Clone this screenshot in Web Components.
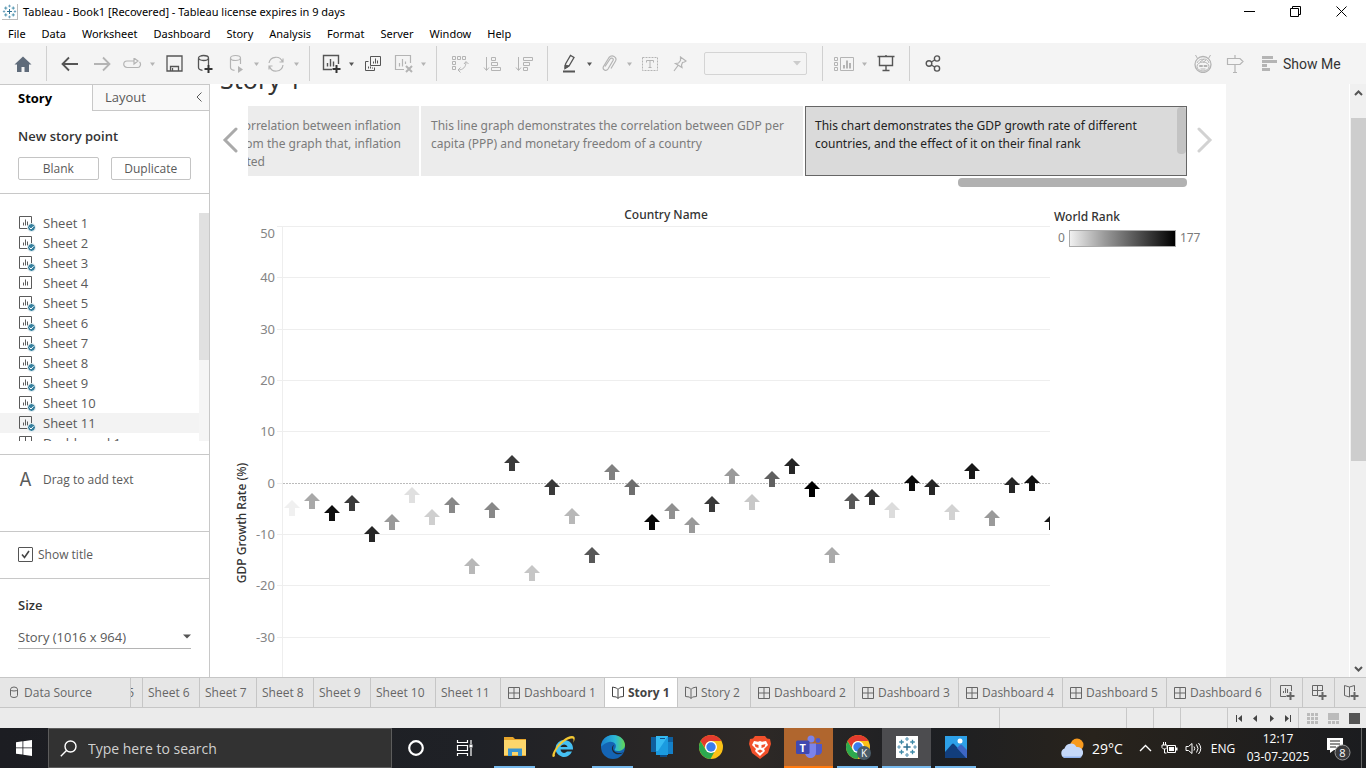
<!DOCTYPE html>
<html lang="en">
<head>
<meta charset="utf-8">
<title>Tableau - Book1</title>
<style>
html,body{margin:0;height:100%}
body{font-family:"Open Sans","Noto Sans",sans-serif;font-size:12px;color:#333;overflow:hidden}
</style>
</head>
<body>
<workbook-window></workbook-window>
<script>
const svg=(w,h,body,extra='')=>`<svg width="${w}" height="${h}" viewBox="0 0 ${w} ${h}" fill="none" stroke="currentColor" ${extra} aria-hidden="true">${body}</svg>`;
const RESET='*{box-sizing:border-box}button,select,input{font:inherit;color:inherit;margin:0;padding:0;border:0;background:none;border-radius:0;outline:0}svg{display:block;flex:none}';
function define(name,html,init){
  const t=document.createElement('template');t.innerHTML=html.replace('<style>','<style>'+RESET);
  customElements.define(name,class extends HTMLElement{
    constructor(){super();this.attachShadow({mode:'open'}).append(t.content.cloneNode(true));}
    connectedCallback(){if(init)init.call(this,this.shadowRoot);}
  });
}
/* Tableau mark: a large centre cross with eight satellites */
const plus=(x,y,r,c,w)=>`<path d="M${x-r} ${y}h${2*r}M${x} ${y-r}v${2*r}" stroke="${c}" stroke-width="${w}"/>`;
const mark=s=>`<svg width="${s}" height="${s}" viewBox="0 0 22 22" fill="none" aria-hidden="true">${plus(11,11,3.6,'#2c6e8f',1.5)}${plus(5.5,6,2.3,'#3f8aa8',1.3)}${plus(16.5,6,2.3,'#3f8aa8',1.3)}${plus(5.5,16,2.3,'#3f8aa8',1.3)}${plus(16.5,16,2.3,'#3f8aa8',1.3)}${plus(11,3,2,'#5b96b5',1.2)}${plus(11,19,2,'#5b96b5',1.2)}${plus(3,11,1.8,'#5b96b5',1.2)}${plus(19,11,1.8,'#5b96b5',1.2)}</svg>`;

define('title-bar',`<style>
:host{display:flex;align-items:center;height:23px;background:#fff;color:#000;font-size:11px;font-family:"Noto Sans",sans-serif;padding-right:2px}
.logo{margin-left:2px;width:16px;height:16px;border-right:1px solid #bbb;border-bottom:1px solid #bbb}
span{margin-left:5px;flex:1}
button{width:46px;height:21px;display:grid;place-items:center}
</style><div class="logo">${mark(15)}</div><span>Tableau - Book1 [Recovered] - Tableau license expires in 9 days</span>
<button aria-label="Minimise">${svg(11,11,'<path d="M0 5.5h11"/>')}</button>
<button aria-label="Restore">${svg(11,11,'<path d="M.5 2.500h8v8H.5zM2.500 2V.5h8v8H8.500"/>')}</button>
<button aria-label="Close">${svg(11,11,'<path d="M.5.5l10 10M10.500.5l-10 10"/>')}</button>`);

define('menu-bar',`<style>
:host{display:flex;height:20px;background:#fff;color:#000;font-size:11px;font-family:"Noto Sans",sans-serif}
button{padding:0 8px;height:20px}
</style>${['File','Data','Worksheet','Dashboard','Story','Analysis','Format','Server','Window','Help'].map(m=>`<button>${m}</button>`).join('')}`);

/* A toolbar button; the "menu" attribute adds the drop-down caret */
define('tool-button',`<style>
:host{display:block;color:#b4b4b4}
:host([on]){color:#555}
button{display:flex;align-items:center;width:32px;height:32px}
.i{width:32px;display:grid;place-items:center}
.c{display:none;width:12px;place-items:center}
:host([menu]) button{width:40px}:host([menu]) .i{width:28px}:host([menu]) .c{display:grid}
:host([narrow]) button,:host([narrow]) .i{width:30px}
</style><button><span class="i"><slot></slot></span><span class="c"><svg width="5" height="4" viewBox="0 0 5 4"><path d="M0 .5h5L2.500 4z" fill="currentColor"/></svg></span></button>`,
function(r){r.querySelector('button').setAttribute('aria-label',this.getAttribute('name'))});

const TI={
home:svg(18,18,'<path d="M9 1.500L.5 9.500h2.500V17h4.500v-5h3v5H15V9.500h2.500z" fill="#5f6b7a" stroke="none"/>'),
back:svg(18,16,'<path d="M17 8H2M8 1.500L1.500 8 8 14.500" stroke-width="1.800"/>'),
fwd:svg(18,16,'<path d="M1 8h15M10 1.500L16.500 8 10 14.500" stroke-width="1.800"/>'),
replay:svg(20,12,'<path d="M12.500 3H5a3.200 3.200 0 0 0 0 6.500h10a3.200 3.200 0 0 0 2.500-5.500M12 0v6l4-3z" stroke-width="1.200"/>'),
save:svg(17,17,'<path d="M1 1h15v15H1zM4.500 16v-4.500h8V16M6.500 13v3" stroke-width="1.300"/>'),
add:svg(18,20,'<path d="M1.500 4.500v9c0 1.500 1.500 2.500 4 2.800M11.500 4.500V11" stroke-width="1.300"/><ellipse cx="6.500" cy="4" rx="5" ry="2.500" stroke-width="1.300"/><path d="M11.500 11v8M7.500 15h8" stroke="#333" stroke-width="2"/>'),
pause:svg(18,20,'<path d="M3.500 4.500v9c0 1.500 1.500 2.500 4 2.800M13.500 4.500V10" stroke-width="1.200"/><ellipse cx="8.500" cy="4" rx="5" ry="2.500" stroke-width="1.200"/><path d="M11 12l5 3.500-5 3.500z" fill="currentColor" stroke="none"/>'),
refresh:svg(18,18,'<path d="M2 8a7 7 0 0 1 13.500-1M16 10A7 7 0 0 1 2.500 11.500M12.500 7h3.500V3.500M5.500 11H2v3.500" stroke-width="1.200"/>'),
chartadd:svg(19,19,'<path d="M16.500 10V1.500h-15v14H10M5.500 12.500V9M8.500 12.500V5M11.500 12.500V7.500" stroke-width="1.400"/><path d="M14.500 11v8M10.500 15h8" stroke="#333" stroke-width="2"/>'),
dup:svg(18,18,'<path d="M6.500 1.500h10v9h-10zM4.500 6.500h-3v9h9v-3M9.500 8.500v-2M11.500 8.500v-5M13.500 8.500v-3M4.500 13.500v-2M6.500 13.500v-2M8.500 13.500v-1"/>'),
clear:svg(19,19,'<path d="M16.500 9V1.500h-15v14H10M5.500 12.500V9M8.500 12.500V5M11.500 10V7.500" stroke-width="1.200"/><path d="M12 12l6 6M18 12l-6 6" stroke-width="2"/>'),
swap:svg(18,18,'<path d="M1.500 1.500h3v3h-3zM6.500 1.500h3v3h-3zM11.500 1.500h3v3h-3zM1.500 6.500h3v3h-3zM1.500 11.500h3v3h-3zM7 15c5 0 8-3 8-8M13 9l2-2.500L17.500 9M9.500 12.500L7 15l2.500 2.500"/>'),
asc:svg(18,16,'<path d="M3.500 1v13M1 11.500l2.500 3 2.500-3M8.500 1.500h4v3h-4zM8.500 6.500h6v3h-6zM8.500 11.500h9v3h-9z"/>'),
desc:svg(18,16,'<path d="M3.500 1v13M1 11.500l2.500 3 2.500-3M8.500 1.500h9v3h-9zM8.500 6.500h6v3h-6zM8.500 11.500h4v3h-4z"/>'),
pen:svg(14,19,'<path d="M3.500 10L8.500 1.500l3.500 2-5 8.500-4 2.500z" stroke-width="1.300"/><path d="M1 17.500h12" stroke-width="2"/><path d="M3 11l4 1-4 2.500z" fill="currentColor"/>'),
clip:svg(16,18,'<path d="M4 11.500L9 4c1.500-2 4-.5 3 1.500L7 14c-2 3-6 .5-4.500-2.500L8 2.500c3-3.500 8.500-.5 6.500 3.500L10 13.500" stroke-width="1.200"/>'),
text:svg(18,16,'<path d="M1.500 1.500h15v13h-15z" stroke-dasharray="2 1"/><path d="M5.500 6.500v-2h7v2M9 4.500v7M7.500 11.500h3"/>'),
pin:svg(14,16,'<path d="M7.500 1L13 5 11.500 6 9.500 6.500 8.500 9l.5 2.500L2.500 7.500 5.500 7 7.500 4.500zM5 9.500L1 15" stroke-width="1.200"/>'),
cards:svg(20,16,'<path d="M.5 1.500h3v3h-3zM.5 6.500h3v3h-3zM.5 11.500h3v3h-3zM6.500 1.500h13v13h-13z"/><path d="M10 12.500V9M13 12.500v-8M16 12.500V7" stroke-width="2"/>'),
present:svg(18,17,'<path d="M.5 1.500h17M2.500 2v8.500h13V2M9 11v5M5.500 15.500h7M9 0v1" stroke-width="1.400"/>'),
share:svg(16,17,'<circle cx="4" cy="8.500" r="2.800"/><circle cx="12" cy="3.500" r="2.600"/><circle cx="12" cy="13.500" r="2.600"/><path d="M6.300 7L9.700 5M6.300 10l3.400 2"/>','stroke-width="1.400"'),
face:svg(20,19,'<circle cx="10" cy="10.500" r="8" stroke-width="1.300"/><path d="M4.500 4.500L2.500 1M15.500 4.500l2-3.500"/><ellipse cx="10" cy="12.500" rx="6" ry="4.500"/><path d="M4 9c2-4 5-4 6-3.500 2-1 5 0 6 3.500M7 8l4-3M10 8.500l3-2.500M6.500 12.500v-1h3v1zM11 12.500v-1h3v1zM7.500 15h5"/>'),
sign:svg(18,18,'<path d="M1.500 3.500h12.500l3 3-3 3H1.500zM9 0v3.500M9 9.500V17M7 17.500h4"/>','stroke-width="1.200"')
};
const tb=(n,attr='',label=n)=>`<tool-button name="${label}" ${attr}>${TI[n]}</tool-button>`;
define('tool-bar',`<style>
:host{display:flex;align-items:center;height:41px;background:#f4f4f4;padding-left:7px}
i{width:1px;height:35px;background:#d0d0d0;margin:0 7px}
.fit{display:grid;margin:0 8px 0 9px;width:103px;height:23px;border:1px solid #d4d4d4;border-radius:2px;align-items:center}
.fit>*{grid-area:1/1}.fit select{appearance:none;width:100%;height:21px}.fit svg{justify-self:end;margin-right:5px;pointer-events:none}
.right{margin-left:auto;display:flex;align-items:center}
.show{display:flex;align-items:center;gap:6px;width:115px;padding-left:11px;height:32px;font:14px Roboto,sans-serif;color:#333}
</style>${tb('home')}<i></i>${tb('back','on')}${tb('fwd')}${tb('replay','menu')}${tb('save','on')}${tb('add','on')}${tb('pause','menu')}${tb('refresh','menu')}<i></i>${tb('chartadd','on menu')}${tb('dup','on')}${tb('clear','menu')}<i></i>${tb('swap')}${tb('asc')}${tb('desc')}<i></i>${tb('pen','on menu')}${tb('clip','menu')}${tb('text','narrow')}${tb('pin','narrow')}
<div class="fit"><select disabled aria-label="Fit"><option></option></select><svg width="8" height="5" viewBox="0 0 8 5"><path d="M0 0h8L4 4.500z" fill="#ccc"/></svg></div><i></i>${tb('cards','menu')}${tb('present','on')}<i></i>${tb('share','on')}
<div class="right">${tb('face')}${tb('sign')}<button class="show"><svg width="15" height="16" viewBox="0 0 15 16" fill="#b4b4b4"><path d="M0 0h11v3H0zM0 4h15v3H0zM0 8h5v3H0zM0 12h8v3H0z"/></svg>Show Me</button></div>`);

const sheetIcon=ok=>svg(18,18,`<path d="M1.500 2.500h12v12h-12zM5.500 11.500v-3M7.500 11.500v-6M9.500 11.500v-4"/>${ok?'<circle cx="13.500" cy="13.500" r="4" fill="#37809e" stroke="#fff"/><path d="M11.500 13.500l1.500 1.500 2.500-2.700" stroke="#fff"/>':''}`);
const sheets=Array.from({length:11},(_,i)=>`<li class="${i==10?'hot':''}">${sheetIcon(i!=3)}Sheet ${i+1}</li>`).join('');
define('story-panel',`<style>
:host{display:flex;flex-direction:column;width:210px;flex:none;border-right:1px solid #c8c8c8;background:#fff;color:#5a5a5a}
.tabs{display:flex;height:27px;border-top:1px solid #c8c8c8;font-size:13px}
.tabs b{width:92px;padding:4px 0 0 18px;line-height:18px;color:#000}
.tabs div{flex:1;display:flex;justify-content:space-between;align-items:center;padding:0 7px 2px 12px;border-left:1px solid #c8c8c8;border-bottom:1px solid #c8c8c8;background:#f9f9f9}
section{border-bottom:1px solid #c8c8c8;padding:0 18px}
h2{margin:0;font-size:13px;line-height:18px;font-weight:600;color:#333}
.new{height:83px;padding-top:16px}
.new div{display:grid;grid-template-columns:1fr 1fr;gap:12px;margin-top:12px}
.new button{height:23px;border:1px solid #c4c4c4;border-radius:2px}
.list{height:261px;padding:19px 0 0}
.scroll{display:flex;height:228px;overflow:hidden}
ul{margin:0;padding:0;list-style:none;flex:1;font-size:13px}
li{display:flex;align-items:center;gap:7px;height:20px;padding-left:18px}
.hot{background:#f3f3f3}
.bar{width:10px;background:#f5f5f5}.bar span{display:block;height:147px;background:#e0e0e0}
.drag{height:77px;display:flex;align-items:center;padding-bottom:27px;gap:10px}
.drag span{font-size:18px;width:15px;text-align:center;font-family:Inter,sans-serif}
.title{height:47px;display:flex;align-items:center;gap:5px;padding-bottom:2px}
.check{display:grid;width:15px;height:15px}.check>*{grid-area:1/1}
.check input{appearance:none;width:15px;height:15px;border:1px solid #555;border-radius:1px}.check svg{pointer-events:none;color:#444}
.size{border:0;padding-top:17px}
.sel{display:grid;align-items:center;margin-top:11px;border-bottom:1px solid #b4b4b4;height:24px}
.sel>*{grid-area:1/1}.sel select{appearance:none;width:100%;height:23px;font-size:13px}.sel svg{justify-self:end;pointer-events:none}
</style>
<div class="tabs"><b>Story</b><div>Layout<button aria-label="Collapse">${svg(6,10,'<path d="M5.500.5L1 5l4.500 4.500"/>')}</button></div></div>
<section class="new"><h2>New story point</h2><div><button>Blank</button><button>Duplicate</button></div></section>
<section class="list"><div class="scroll"><ul>${sheets}<li>${svg(18,18,'<path d="M1.500 2.500h12v12h-12zM7.500 2.500v12M1.500 8.500h12"/>')}Dashboard 1</li></ul><div class="bar"><span></span></div></div></section>
<section class="drag"><span>A</span>Drag to add text</section>
<section class="title"><div class="check"><input type="checkbox" id="t" checked>${svg(15,15,'<path d="M4 7.500L6.500 10.500 11 4" stroke-width="1.600"/>')}</div><label for="t">Show title</label></section>
<section class="size"><h2><label for="s">Size</label></h2><div class="sel"><select id="s"><option>Story (1016 x 964)</option></select><svg width="8" height="5" viewBox="0 0 8 5"><path d="M0 .5h8L4 4.500z" fill="#555"/></svg></div></section>`);

/* Marks of the view: vertical position of each arrow's tip and its rank shade */
const marks=[[500,'f0f0f0'],[493,'a8a8a8'],[505,'0e0e0e'],[495,'3a3a3a'],[526,'262626'],[514,'9a9a9a'],[487,'e0e0e0'],[509,'cfcfcf'],[497,'888888'],[558,'b8b8b8'],[502,'888888'],[455,'3a3a3a'],[565,'c6c6c6'],[479,'3a3a3a'],[508,'b8b8b8'],[547,'585858'],[464,'808080'],[479,'6e6e6e'],[514,'080808'],[503,'909090'],[517,'9a9a9a'],[496,'3a3a3a'],[468,'9a9a9a'],[494,'c8c8c8'],[471,'606060'],[458,'262626'],[481,'000000'],[547,'aaaaaa'],[493,'585858'],[489,'333333'],[502,'dcdcdc'],[475,'0a0a0a'],[479,'262626'],[504,'d2d2d2'],[463,'181818'],[510,'9a9a9a'],[477,'262626'],[475,'101010'],[514,'181818']];
const grid=[[226,50],[277,40],[329,30],[380,20],[431,10],[483,0],[534,-10],[585,-20],[637,-30]];
const chart=`<svg width="820" height="451" viewBox="230 226 820 451" role="img" aria-label="GDP growth rate by country">
<g shape-rendering="crispEdges" stroke="#eeeeee"><path d="M282.500 226v451"/>${grid.map(([y,v])=>v===0?`<path d="M277 483.500h6"/><path d="M283 483.500h767" stroke="#bbb" stroke-dasharray="2 1"/>`:`<path d="M277 ${y}.5h773"/>`).join('')}</g>
<g fill="#858585" font-size="13" text-anchor="end">${grid.map(([y,v])=>`<text x="275" y="${v==50?238:y+5}">${v}</text>`).join('')}</g>
<text transform="translate(246 523) rotate(-90)" text-anchor="middle" font-size="12" fill="#333" font-weight="500">GDP Growth Rate (%)</text>
<g>${marks.map(([y,c],i)=>`<path d="M${292+20*i} ${y}l8 8h-5v8h-6v-8h-5z" fill="#${c}"/>`).join('')}</g></svg>`;
define('story-canvas',`<style>
:host{display:flex;flex:1;min-width:0;overflow:hidden;background:#f4f4f4;font-family:"Noto Sans",sans-serif}
.page{flex:1;min-width:0;overflow:hidden;background:#fff;margin-right:123px;color:#333}
h1{margin:-23px 0 0 10px;font-size:25px;line-height:36px;height:36px;font-weight:400}
.nav{display:flex;align-items:center;margin-top:9px;height:70px;padding:0 13px 0 12px}
.nav button{width:16px;height:26px;margin-bottom:2px}
.points{flex:1;min-width:0;display:flex;justify-content:flex-end;gap:2px;overflow:hidden;margin:0 10px;height:70px}
.p{flex:none;width:382px;padding:11px 10px 0;background:#ececec;color:#7b7b7b;line-height:18px;white-space:nowrap}
.p.part{width:171px;padding:11px 18px 0 0;display:flex;flex-direction:column;align-items:flex-end}
.part .end{margin-right:136px}
.p.on{display:flex;justify-content:space-between;padding:0;background:#dadada;border:1px solid #666;color:#222}
.on div{padding:10px 9px}.on i{width:9px;height:47px;background:#c3c3c3;border-radius:4px}
.h{display:flex;justify-content:flex-end;height:11px;padding:2px 39px 0 0}.h i{width:229px;height:9px;border-radius:4px;background:#b1b1b1}
.view{display:flex;margin:19px 0 0 20px}
.ct{text-align:center;line-height:18px;height:20px;font-weight:500;padding-left:52px}
.chart{flex:none;width:820px}
.leg{margin:2px 0 0 4px;line-height:18px}.leg b{font-weight:500;display:block}
.leg div{display:flex;align-items:center;gap:4px;padding-left:4px;margin-top:3px;color:#7b7b7b}
.leg i{width:107px;height:17px;border:1px solid #aaa;background:linear-gradient(90deg,#f0f0f0,#9a9a9a 33%,#4c4c4c 67%,#000)}
.vs{width:17px;background:#f0f0f0;border-left:1px solid #fff;display:flex;flex-direction:column;align-items:center}
.vs button{height:17px;display:grid;place-items:center;color:#555}.vs i{width:15px;height:343px;background:#cdcdcd;margin:17px 0 auto}
</style>
<div class="page"><h1>Story 1</h1>
<div class="nav"><button aria-label="Previous">${svg(16,26,'<path d="M14 2L3 13l11 11" stroke="#aaa" stroke-width="3" stroke-linecap="round"/>')}</button>
<div class="points"><div class="p part"><span>correlation between inflation</span><span>from the graph that, inflation</span><span class="end">affected</span></div><div class="p">This line graph demonstrates the correlation between GDP per<br>capita (PPP) and monetary freedom of a country</div><div class="p on"><div>This chart demonstrates the GDP growth rate of different<br>countries, and the effect of it on their final rank</div><i></i></div></div>
<button aria-label="Next">${svg(16,26,'<path d="M2 2l11 11L2 24" stroke="#d2d2d2" stroke-width="3" stroke-linecap="round"/>')}</button></div>
<div class="h"><i></i></div>
<div class="view"><div class="chart"><div class="ct">Country Name</div>${chart}</div><div class="leg"><b>World Rank</b><div>0<i></i>177</div></div></div></div>
<div class="vs"><button aria-label="Up">${svg(9,6,'<path d="M1 5l3.500-3.500L8 5" stroke-width="2"/>')}</button><i></i><button aria-label="Down">${svg(9,6,'<path d="M1 1l3.500 3.500L8 1" stroke-width="2"/>')}</button></div>`);

const dashI=svg(12,12,'<path d="M.5.5h11v11H.5zM6 .5v11M.5 6h11"/>');
const bookI=svg(12,13,'<path d="M.5 1l4 1L6 3.500 7.500 2l4-1v9.500l-4 .5L6 12.500 4.500 11l-4-.5zM6 3.500v9"/>');
const pl='<path d="M11.500 8v8M7.500 12h8" stroke-width="2"/>';
define('sheet-tabs',`<style>
:host{display:flex;height:31px;background:#e6e6e6;border-top:1px solid #c6c6c6;border-bottom:1px solid #c6c6c6;color:#666;overflow:hidden}
button{display:flex;align-items:center;height:29px;border-right:1px solid #c6c6c6;padding-left:5px;flex:none;white-space:nowrap;overflow:hidden;gap:4px}
.src{width:131px;padding-left:9px;gap:5px}.cut{width:12px;padding:0 8px 0 0;justify-content:flex-end}
.s{width:57px}.t{width:65px}.d{width:104px;padding-left:7px}.b{width:73px;padding-left:7px}
.b.on{background:#fff;font-weight:700;color:#444}.n{width:32px;padding-left:8px}
</style><button class="src">${svg(10,13,'<path d="M1.500 3.500q0-2.500 3.500-2.500t3.500 2.500v6q0 2-3.500 2t-3.500-2zM1.500 3.500q0 1.500 3.500 1.500t3.500-1.500"/>')}Data Source</button><button class="cut">5</button>
${[6,7,8,9].map(n=>`<button class="s">Sheet ${n}</button>`).join('')}<button class="t">Sheet 10</button><button class="t">Sheet 11</button><button class="d">${dashI}Dashboard 1</button><button class="b on">${bookI}Story 1</button><button class="b">${bookI}Story 2</button>${[2,3,4,5,6].map(n=>`<button class="d">${dashI}Dashboard ${n}</button>`).join('')}
<button class="n" aria-label="New worksheet">${svg(17,17,'<path d="M12.500 7V1.500h-11v11H7M4.500 9V7M6.500 9V4M8.500 9V5"/>'+pl)}</button><button class="n" aria-label="New dashboard">${svg(17,17,'<path d="M11.500 7V1.500h-10v10H7M6.500 1.500v10M1.500 6.500h10"/>'+pl)}</button><button class="n" aria-label="New story">${svg(17,17,'<path d="M1.500 1.500l5 1.500 5-1.500V7M1.500 1.500v10L6.500 13V3"/>'+pl)}</button>`);

define('status-bar',`<style>
:host{display:flex;justify-content:flex-end;height:20px;background:#ebebeb;color:#444}
div{border-left:1px solid #c8c8c8;display:flex;align-items:center}
.w{width:127px}.m{width:27px}.x{width:47px}.nav{width:71px;padding-left:3px}.v{width:68px;gap:9px;padding-left:8px}
.nav button{width:16px;height:16px;display:grid;place-items:center}
</style><div class="w"></div><div class="m"></div><div class="m"></div><div class="x"></div>
<div class="nav">${[['First','M1 1h1v7H1zM7 1v7L3 4.500z'],['Previous','M6 1v7L2 4.500z'],['Next','M3 1v7l4-3.500z'],['Last','M7 1h1v7H7zM2 1v7l4-3.500z']].map(([l,d])=>`<button aria-label="${l}"><svg width="9" height="9" viewBox="0 0 9 9"><path d="${d}" fill="currentColor"/></svg></button>`).join('')}</div>
<div class="v"><svg width="12" height="11" viewBox="0 0 12 11"><path d="M0 0h3v3H0zM4 0h3v3H4zM8 0h3v3H8zM0 4h3v3H0zM4 4h3v3H4zM8 4h3v3H8zM0 8h3v3H0zM4 8h3v3H4zM8 8h3v3H8z" fill="#bbb"/></svg><svg width="12" height="11" viewBox="0 0 12 11"><path d="M0 0h11v7H0zM0 8h3v3H0zM4 8h3v3H4zM8 8h3v3H8z" fill="#bbb"/></svg><svg width="11" height="11"><path d="M0 0h11v11H0z" fill="#555"/></svg></div>`);

const pic=b=>`<svg width="26" height="26" viewBox="0 0 26 26" aria-hidden="true">${b}</svg>`;
const chromeB='<circle cx="13" cy="13" r="12" fill="#fbc116"/><path d="M2.600 7A12 12 0 0 0 12.500 25l5.200-9.500L13 13 7.800 16z" fill="#2da94f"/><path d="M2.600 7a12 12 0 0 1 20.800 0H13a6 6 0 0 0-5.300 3.500L7.200 14z" fill="#e33b2e"/><circle cx="13" cy="13" r="6" fill="#fff"/><circle cx="13" cy="13" r="4.700" fill="#3b7ded"/>';
const apps=[
['File Explorer','u','<path d="M2 3h9l2 2h11v17H2z" fill="#e6a52b"/><path d="M2 6h22v15H2z" fill="#fbd66b"/><path d="M6 22v-7.500h14V22h-4v-4h-6v4z" fill="#3a95d0"/>'],
['Internet Explorer','','<path d="M13 6a8.500 8.500 0 1 0 8 11.500h-5c-2 2.500-6 1.500-6.500-2H22C22.500 10 18.500 6 13 6zm-3.500 7c.8-3.500 6.500-3.500 7 0z" fill="#45c0f2"/><path d="M4 22c-3 3-4-1 0-7C8 8 16 2 21 2c4 0 3 4 1 7 1-3 1-5-2-4.500C12 6 3 17 4 22z" fill="#f5c933"/>'],
['Edge','u','<defs><linearGradient id="e" x1="0" x2="1"><stop stop-color="#1b80d0"/><stop offset=".6" stop-color="#2cb8d6"/><stop offset="1" stop-color="#64d850"/></linearGradient></defs><circle cx="13" cy="13" r="12" fill="#1464b4"/><path d="M1 13C1 6 6 1 13 1c8 0 12 6 12 10s-4 6-7 6-4-1-3-2c3-5-2-8-6-7-5 1-8 5-8 5z" fill="url(#e)"/><path d="M14 11c-3 1-3 7 2 9 4 1 7-1 8-2-1 1-4 1-6 1-5-1-6-5-4-8z" fill="#202a33"/>'],
['Your Phone','','<path d="M2 3h22v15H2z" fill="#0f5f9e"/><path d="M18 8h6v12h-6z" fill="#1480c8"/><path d="M7 2h12v19H7z" fill="#1b9be0"/><path d="M7 2h12L9 17H7z" fill="#35baf2"/><path d="M11 4h5v1h-5z" fill="#0d4f86"/><path d="M11 21h7v2h-7z" fill="#0c4b85"/>'],
['Chrome','',chromeB],
['Brave','','<path d="M8 2h10l2 2.500 3 .5 1 5-3 9-8 6-8-6-3-9 1-5 3-.5z" fill="#f2502b"/><path d="M7 7l4 .8 2-.8 2 .8L19 7l2 4-4 4 1 2-5 5-5-5 1-2-4-4z" fill="#fff"/><path d="M7.500 10l4 1v3l-3-1zM18.500 10l-4 1v3l3-1zM10 17l3-1.500 3 1.500-3 2z" fill="#f2502b"/>'],
['Teams','teams','<circle cx="15" cy="5" r="3.500" fill="#7b83eb"/><circle cx="22" cy="6.500" r="2.400" fill="#5059c9"/><path d="M18 10h8v7c0 5-7 5-8 2z" fill="#5059c9"/><path d="M9 9.500h11V18c0 8-11 8-11 0z" fill="#7b83eb"/><rect x="0" y="6.500" width="13.500" height="13.500" rx="1.500" fill="#4049b0"/><text x="6.800" y="17.500" font-size="11" font-weight="700" fill="#fff" text-anchor="middle">T</text>'],
['Chrome profile','u',chromeB+'<circle cx="19" cy="19" r="7" fill="#4a5c68"/><text x="19" y="23" font-size="10" fill="#fff" text-anchor="middle">K</text>'],
['Tableau','tab','<path d="M2 2h22v22H2z" fill="#fff"/><g transform="translate(2 2)">'+mark(22).replace(/<svg[^>]*>|<\/svg>/g,'')+'</g>'],
['Photos','u','<path d="M2 2h22v22H2z" fill="#2da0e8"/><path d="M2 18l7-8q1-1 2 0l13 14H2z" fill="#123e7c"/><path d="M14 14l3-3q1-1 2 0l5 5v8h-1z" fill="#3d66c4"/><circle cx="17" cy="7" r="2.500" fill="#fff"/>']];
define('task-bar',`<style>
:host{display:flex;height:40px;background:linear-gradient(90deg,#1c1d22,#1f2126 35%,#2e2926 55%,#1d1f23 68%,#28231c 80%,#1b1c1f);color:#fff}
button{display:grid;place-items:center;flex:none;height:40px}
.w{width:48px}
.search{display:flex;align-items:center;width:344px;border:1px solid #5c5c5c;background:#323232;padding-left:11px;gap:11px}
.search input{flex:1;min-width:0;font-size:14px}.search input::placeholder{color:#d0d0d0;opacity:1}
.apps{display:flex;margin-left:2px;flex:1}
.apps button{width:49px;padding:0 4px;grid-template-rows:38px 2px}
.apps button::after{content:"";width:100%;height:2px}
.apps .u::after{background:#76b9ed}.apps .teams{background:#b0662e;padding:0}.apps .teams::after{background:#ff7a10}.apps .tab{background:#4c4c4f;padding:0}.apps .tab::after{background:#76b9ed}
.tray{display:flex;align-items:center}
.wx{display:flex;gap:7px;font-size:14px;width:74px}
.e{width:24px}.lang{width:36px}.clk{width:74px;line-height:18px;text-align:center;font-size:12px}
.note{width:46px}.end{width:5px;border-left:1px solid #666;height:40px}
</style><button class="w" aria-label="Start"><svg width="16" height="16" viewBox="0 0 16 16"><path d="M0 2.200l6.500-.9v6.200H0zM7.300 1.200L16 0v7.500H7.300zM0 8.300h6.500v6.200L0 13.700zM7.300 8.300H16V16l-8.700-1.300z" fill="#fff"/></svg></button>
<div class="search">${svg(17,17,'<circle cx="10.500" cy="6.500" r="5.500"/><path d="M6.500 10.500L.8 16.200"/>','stroke-width="1.400"')}<input type="text" placeholder="Type here to search" aria-label="Search"></div>
<button class="w" aria-label="Cortana">${svg(18,18,'<circle cx="9" cy="9" r="6.800" stroke-width="2.200"/>')}</button>
<button class="w" aria-label="Task view">${svg(17,16,'<path d="M1.500 0v2.500h10V0M1.500 5.500h10v5h-10zM1.500 16v-2.500h10V16M15 0v4M15 8v8"/><path d="M13.500 4.500h3v3h-3z" fill="#fff" stroke="none"/>','stroke-width="1.200"')}</button>
<div class="apps">${apps.map(([n,c,b])=>`<button class="${c}" aria-label="${n}">${pic(b)}</button>`).join('')}</div>
<div class="tray"><button class="wx"><svg width="26" height="22" viewBox="0 0 26 22"><circle cx="18" cy="8" r="6.500" fill="#f79a1e"/><path d="M6 21a5 5 0 0 1-.5-9.500 6.500 6.500 0 0 1 12-1.500 5.500 5.500 0 0 1 2 11z" fill="#c5d8f8"/><path d="M3 19.500h20c-1 1.500-2 1.500-4 1.500H6z" fill="#8fb2ee"/></svg>29°C</button>
<button class="e" aria-label="Hidden icons">${svg(13,8,'<path d="M1 7l5.500-5.500L12 7"/>','stroke-width="1.400"')}</button>
<button class="e" aria-label="Battery">${svg(17,13,'<path d="M6.500 3.500h8v7h-8z"/><path d="M8 5h5v4H8zM15 5.500h1.500v3H15z" fill="#fff" stroke="none"/><path d="M2.500 0v3M4.500 0v3M1 3h5v2.500L4.500 7h-2L1 5.500zM3.500 7v4h2"/>')}</button>
<button class="e" aria-label="Volume">${svg(17,13,'<path d="M1 4.500h2.500L7 1.500v10L3.500 8.500H1zM9 4.500q1.500 2 0 4M11.500 2.500q3 4 0 8M13.500 1q4.500 5.500 0 11"/>')}</button>
<button class="lang">ENG</button><button class="clk"><span>12:17<br>03-07-2025</span></button>
<button class="note" aria-label="Notifications"><svg width="26" height="26" viewBox="0 0 26 26"><path d="M2 3h16v12H9l-4 3v-3H2z" fill="#fff"/><path d="M5 6h10M5 9h10M5 12h6" stroke="#222"/><circle cx="17.500" cy="17.500" r="7.500" fill="#3a3a3c" stroke="#999"/><text x="17.500" y="21.500" font-size="11" fill="#fff" text-anchor="middle">8</text></svg></button><span class="end"></span></div>`);

define('workbook-window',`<style>
:host{display:flex;flex-direction:column;height:100vh}
main{display:flex;flex:1;min-height:0;overflow:hidden}
</style><title-bar></title-bar><menu-bar></menu-bar><tool-bar></tool-bar><main><story-panel></story-panel><story-canvas></story-canvas></main><sheet-tabs></sheet-tabs><status-bar></status-bar><task-bar></task-bar>`);
</script>
</body>
</html>
